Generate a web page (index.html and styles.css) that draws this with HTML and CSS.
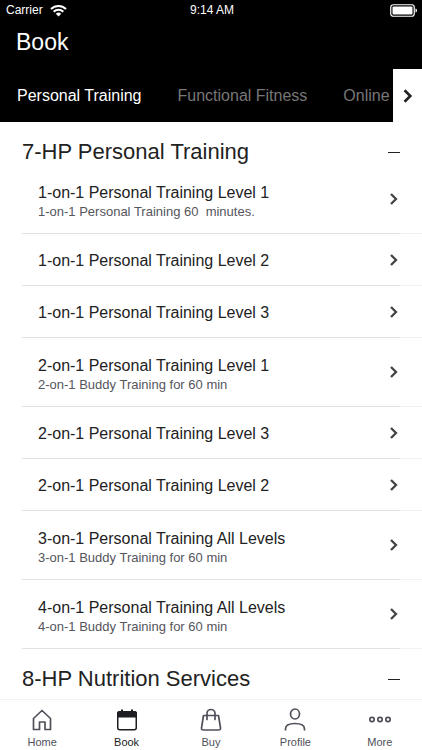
FILE: index.html
```html
<!DOCTYPE html>
<html lang="en">
<head>
<meta charset="utf-8">
<meta name="viewport" content="width=device-width, initial-scale=1">
<title>Book</title>
<link rel="stylesheet" href="styles.css">
</head>
<body>
<svg class="defs" aria-hidden="true">
  <symbol id="chevron" viewBox="0 0 10 14"><path d="M2 2l5 5-5 5" fill="none" stroke="currentColor" stroke-width="2.300"/></symbol>
</svg>
<header class="top">
  <div class="status">
    <div class="carrier"><span>Carrier</span>
      <svg width="17" height="13" viewBox="0 0 17 13" aria-hidden="true"><g fill="none" stroke="#fff" stroke-width="2"><path d="M1 5a10.600 10.600 0 0 1 15 0"/><path d="M3.700 7.700a6.800 6.800 0 0 1 9.600 0"/></g><path d="M5.800 9.800a3.800 3.800 0 0 1 5.400 0L8.500 12.500z" fill="#fff"/></svg>
    </div>
    <time>9:14 AM</time>
    <svg class="battery" width="28" height="13" viewBox="0 0 28 13" aria-hidden="true"><rect x=".75" y=".75" width="23.500" height="11.500" rx="2.500" fill="none" stroke="#fff" stroke-width="1.200"/><rect x="2.500" y="2.500" width="20" height="8" rx="1" fill="#fff"/><path d="M25.500 4.500c2 .5 2 3.500 0 4z" fill="#fff"/></svg>
  </div>
  <h1>Book</h1>
  <div class="tabbar">
    <nav class="tabs" aria-label="Categories">
      <a class="active" href="#training">Personal Training</a>
      <a href="#fitness">Functional Fitness</a>
      <a href="#online">Online</a>
    </nav>
    <button class="next" aria-label="More categories"><svg width="12" height="16"><use href="#chevron"/></svg></button>
  </div>
</header>
<main>
  <section id="training">
    <h2><button aria-expanded="true">7-HP Personal Training<span class="minus"></span></button></h2>
    <ul>
      <li><a href="#s1"><span class="text"><span class="name">1-on-1 Personal Training Level 1</span><span class="note">1-on-1 Personal Training 60&nbsp; minutes.</span></span><svg class="chev" width="10" height="14"><use href="#chevron"/></svg></a></li>
      <li><a href="#s2"><span class="text"><span class="name">1-on-1 Personal Training Level 2</span></span><svg class="chev" width="10" height="14"><use href="#chevron"/></svg></a></li>
      <li><a href="#s3"><span class="text"><span class="name">1-on-1 Personal Training Level 3</span></span><svg class="chev" width="10" height="14"><use href="#chevron"/></svg></a></li>
      <li><a href="#s4"><span class="text"><span class="name">2-on-1 Personal Training Level 1</span><span class="note">2-on-1 Buddy Training for 60 min</span></span><svg class="chev" width="10" height="14"><use href="#chevron"/></svg></a></li>
      <li><a href="#s5"><span class="text"><span class="name">2-on-1 Personal Training Level 3</span></span><svg class="chev" width="10" height="14"><use href="#chevron"/></svg></a></li>
      <li><a href="#s6"><span class="text"><span class="name">2-on-1 Personal Training Level 2</span></span><svg class="chev" width="10" height="14"><use href="#chevron"/></svg></a></li>
      <li><a href="#s7"><span class="text"><span class="name">3-on-1 Personal Training All Levels</span><span class="note">3-on-1 Buddy Training for 60 min</span></span><svg class="chev" width="10" height="14"><use href="#chevron"/></svg></a></li>
      <li><a href="#s8"><span class="text"><span class="name">4-on-1 Personal Training All Levels</span><span class="note">4-on-1 Buddy Training for 60 min</span></span><svg class="chev" width="10" height="14"><use href="#chevron"/></svg></a></li>
    </ul>
  </section>
  <section id="nutrition">
    <h2><button aria-expanded="true">8-HP Nutrition Services<span class="minus"></span></button></h2>
  </section>
</main>
<nav class="bottom" aria-label="Main">
  <a href="#home"><svg width="24" height="24" viewBox="0 0 24 24"><path d="M3.500 10.500L12 2.500l8.500 8V21.500h-5.500v-7.500H9.500v7.500h-6z" fill="none" stroke="currentColor" stroke-width="1.700" stroke-linejoin="round"/></svg>Home</a>
  <a class="active" href="#book"><svg width="24" height="24" viewBox="0 0 24 24"><rect x="2.750" y="3.750" width="18.500" height="18" rx="2" fill="none" stroke="currentColor" stroke-width="1.500"/><path d="M2 9.500V5.500a2.500 2.500 0 0 1 2.500-2.500H6V1.500h2V3h8V1.500h2V3h1.500A2.500 2.500 0 0 1 22 5.500v4z" fill="currentColor"/></svg>Book</a>
  <a href="#buy"><svg width="24" height="24" viewBox="0 0 24 24"><path d="M4.500 7.500h15l2 12.500q.200 2-1.800 2H4.300q-2 0-1.800-2zM8 11.500V5.500a4 4 0 0 1 8 0v6" fill="none" stroke="currentColor" stroke-width="1.700" stroke-linejoin="round" stroke-linecap="round"/></svg>Buy</a>
  <a href="#profile"><svg width="24" height="24" viewBox="0 0 24 24"><ellipse cx="12" cy="6" rx="4.500" ry="5" fill="none" stroke="currentColor" stroke-width="1.700"/><path d="M2.500 22.500v-1.500c0-3.500 3-5.500 9.500-5.500s9.500 2 9.500 5.500v1.500" fill="none" stroke="currentColor" stroke-width="1.700"/></svg>Profile</a>
  <a href="#more"><svg width="24" height="24" viewBox="0 0 24 24"><g fill="none" stroke="currentColor" stroke-width="1.700"><circle cx="4" cy="11.500" r="2.200"/><circle cx="12" cy="11.500" r="2.200"/><circle cx="20" cy="11.500" r="2.200"/></g></svg>More</a>
</nav>
</body>
</html>
```
FILE: styles.css
```css
* { box-sizing: border-box; }
body {
  margin: 0;
  height: 100vh;
  display: flex;
  flex-direction: column;
  background: #fff;
  color: #222;
  font: 16px/20px "Liberation Sans", Arial, sans-serif;
}
a { color: inherit; text-decoration: none; }
button { border: 0; padding: 0; background: none; color: inherit; font: inherit; cursor: pointer; }
svg { flex: none; }
.defs { position: absolute; width: 0; height: 0; }

.top { flex: none; background: #000; color: #fff; }
.status {
  display: grid;
  grid-template-columns: 1fr auto 1fr;
  align-items: center;
  height: 20px;
  padding: 0 4px 0 6px;
  font-size: 12px;
}
.carrier { display: flex; align-items: center; gap: 7px; }
.battery { justify-self: end; }
h1 { margin: 8px 16px 13px; font-size: 23px; line-height: 28px; font-weight: 400; }
.tabbar { display: flex; height: 53px; }
.tabs { flex: 1; min-width: 0; display: flex; align-items: center; gap: 36px; padding-left: 17px; overflow: hidden; white-space: nowrap; color: #777; }
.tabs .active { color: #fff; }
.next { display: flex; align-items: center; justify-content: center; width: 29px; background: #fff; color: #222; }

main { flex: 1; min-height: 0; overflow: auto; scrollbar-width: none; }
h2 { margin: 0; font-size: 22px; line-height: 26px; font-weight: 400; }
h2 button { display: flex; align-items: center; justify-content: space-between; width: 100%; padding: 17px 22px 0; text-align: left; }
.minus { width: 12px; height: 1px; background: #222; }
ul { margin: 0; padding: 0 0 0 22px; list-style: none; }
li { border-bottom: 1px solid; border-image: linear-gradient(to right, #e2e2e2 calc(100% - 23px), #f2f2f2 calc(100% - 23px)) 1; }
li a { display: flex; align-items: center; min-height: 51px; padding: 0 23px 0 16px; }
.text { flex: 1; padding-top: 2px; }
.name, .note { display: block; }
.name { line-height: 21px; }
.note { font-size: 13px; line-height: 18px; color: #55555c; }
.text:has(.note) { padding: 17px 0 12px; }
.chev { color: #444; }

.bottom { flex: none; display: grid; grid-template-columns: repeat(5, 1fr); height: 51px; border-top: 1px solid #f2f2f2; background: #fff; color: #50505a; }
.bottom a { display: flex; flex-direction: column; align-items: center; padding-top: 8px; font-size: 11px; line-height: 21px; }
.bottom .active { color: #1d1d22; }
```
